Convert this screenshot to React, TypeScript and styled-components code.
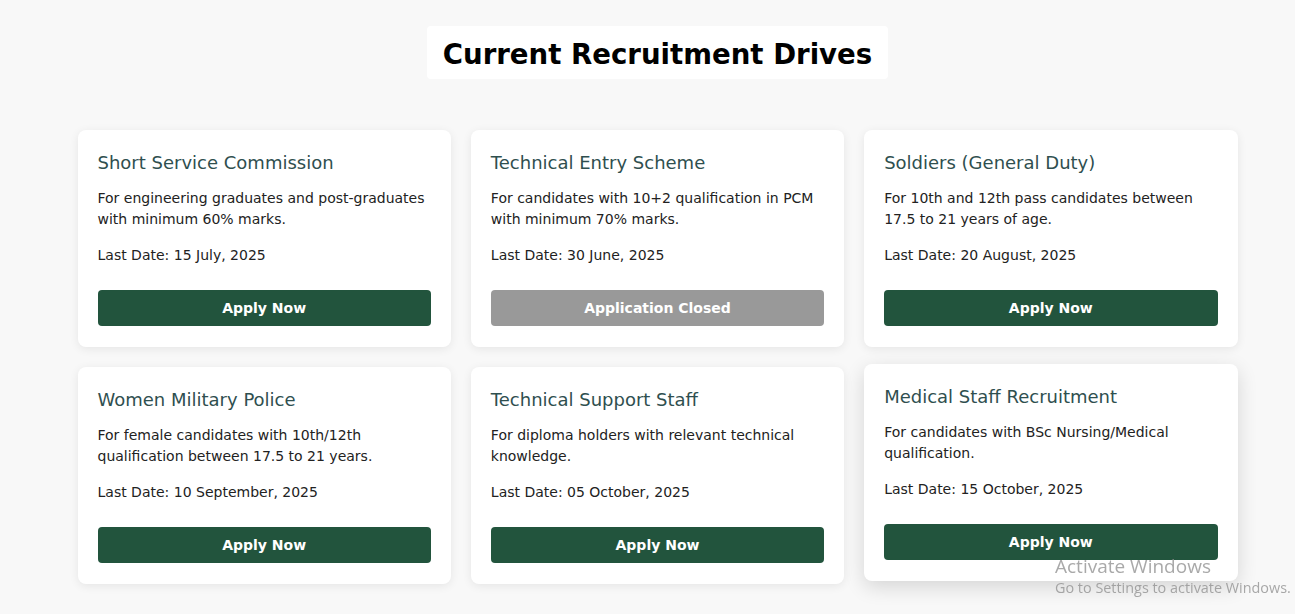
import React from "react";
import styled, { createGlobalStyle, css } from "styled-components";

const GlobalStyle = createGlobalStyle`
  html, body {
    margin: 0;
    padding: 0;
    background: #f8f8f8;
    font-family: "DejaVu Sans", Verdana, sans-serif;
  }
  * { box-sizing: border-box; }
`;

const Page = styled.main`
  padding: 26px 0 30px 20px;
  min-height: 614px;
`;

const Inner = styled.div`
  width: 1160px;
  margin: 0 auto;
  display: flex;
  flex-direction: column;
  align-items: center;
`;

const Heading = styled.h2`
  margin: 0 0 51px;
  padding: 11px 16px 7px;
  background: #ffffff;
  border-radius: 4px;
  font-size: 27.6px;
  font-weight: 700;
  color: #000;
  line-height: 35px;
`;

const Grid = styled.div`
  width: 100%;
  display: grid;
  grid-template-columns: repeat(3, 1fr);
  gap: 20px;
`;

const Card = styled.div<{ $hover?: boolean }>`
  background: #fff;
  border-radius: 8px;
  padding: 20px 20px 21px;
  display: flex;
  flex-direction: column;
  box-shadow: 0 2px 10px rgba(0, 0, 0, 0.08);
  ${(p) =>
    p.$hover &&
    css`
      transform: translateY(-3px);
      box-shadow: 0 6px 20px rgba(0, 0, 0, 0.14);
    `}
`;

const Title = styled.h3`
  margin: 0 0 12px;
  font-size: 18px;
  font-weight: 400;
  line-height: 26px;
  color: #2f4f4f;
`;

const Text = styled.p<{ $gap: number }>`
  margin: 0 0 ${(p) => p.$gap}px;
  font-size: 14px;
  line-height: 21px;
  color: #222;
`;

const Button = styled.button<{ $closed?: boolean }>`
  width: 100%;
  height: 36px;
  border: none;
  border-radius: 4px;
  background: ${(p) => (p.$closed ? "#999999" : "#22543d")};
  color: #fff;
  font-family: "DejaVu Sans", Verdana, sans-serif;
  font-size: 14px;
  font-weight: 700;
  cursor: ${(p) => (p.$closed ? "default" : "pointer")};
`;

const Watermark = styled.div`
  position: fixed;
  left: 1055px;
  top: 555px;
  color: rgba(140, 140, 140, 0.75);
  font-family: "Open Sans", "Liberation Sans", sans-serif;
  pointer-events: none;
`;

const WmTitle = styled.div`
  font-size: 19px;
  line-height: 22px;
`;

const WmSub = styled.div`
  font-size: 14.4px;
  line-height: 20px;
  margin-top: 1px;
`;

const drives = [
  {
    title: "Short Service Commission",
    desc: "For engineering graduates and post-graduates with minimum 60% marks.",
    date: "15 July, 2025",
  },
  {
    title: "Technical Entry Scheme",
    desc: "For candidates with 10+2 qualification in PCM with minimum 70% marks.",
    date: "30 June, 2025",
    closed: true,
  },
  {
    title: "Soldiers (General Duty)",
    desc: "For 10th and 12th pass candidates between 17.5 to 21 years of age.",
    date: "20 August, 2025",
  },
  {
    title: "Women Military Police",
    desc: "For female candidates with 10th/12th qualification between 17.5 to 21 years.",
    date: "10 September, 2025",
  },
  {
    title: "Technical Support Staff",
    desc: "For diploma holders with relevant technical knowledge.",
    date: "05 October, 2025",
  },
  {
    title: "Medical Staff Recruitment",
    desc: "For candidates with BSc Nursing/Medical qualification.",
    date: "15 October, 2025",
    hover: true,
  },
];

export default function App() {
  return (
    <>
      <GlobalStyle />
      <Page>
        <Inner>
          <Heading>Current Recruitment Drives</Heading>
          <Grid>
            {drives.map((d) => (
              <Card key={d.title} $hover={d.hover}>
                <Title>{d.title}</Title>
                <Text $gap={15}>{d.desc}</Text>
                <Text $gap={24}>Last Date: {d.date}</Text>
                <Button $closed={d.closed}>
                  {d.closed ? "Application Closed" : "Apply Now"}
                </Button>
              </Card>
            ))}
          </Grid>
        </Inner>
      </Page>
      <Watermark>
        <WmTitle>Activate Windows</WmTitle>
        <WmSub>Go to Settings to activate Windows.</WmSub>
      </Watermark>
    </>
  );
}
